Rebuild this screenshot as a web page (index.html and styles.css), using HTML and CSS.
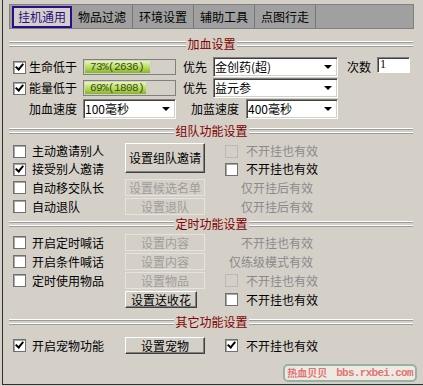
FILE: index.html
```html
<!DOCTYPE html>
<html lang="zh-CN">
<head>
  <meta charset="UTF-8">
  <title>挂机通用</title>
  <link rel="stylesheet" href="styles.css">
</head>
<body>
  <div class="window">
    <div class="tabs">
      <div class="tab active">挂机通用</div>
      <div class="tab">物品过滤</div>
      <div class="tab">环境设置</div>
      <div class="tab">辅助工具</div>
      <div class="tab">点图行走</div>
    </div>

    <div class="head first"><span class="groove"></span><span class="title">加血设置</span><span class="groove"></span></div>
    <div class="blood">
      <div class="brow">
        <span class="cb on"></span><span class="name">生命低于</span>
        <div class="bar"><div class="fill" style="width:73%">73%(2636)</div></div>
        <span class="pri">优先</span>
        <div class="select wide">金创药(超)<i class="arrow"></i></div>
        <span class="times">次数</span>
        <div class="edit">1</div>
      </div>
      <div class="brow">
        <span class="cb on"></span><span class="name">能量低于</span>
        <div class="bar"><div class="fill" style="width:69%">69%(1808)</div></div>
        <span class="pri">优先</span>
        <div class="select wide">益元参<i class="arrow"></i></div>
      </div>
      <div class="brow">
        <span class="name indent">加血速度</span>
        <div class="select mid">100毫秒<i class="arrow"></i></div>
        <span class="speed">加蓝速度</span>
        <div class="select mid2">400毫秒<i class="arrow"></i></div>
      </div>
    </div>

    <div class="head team-head"><span class="groove"></span><span class="title">组队功能设置</span><span class="groove"></span></div>
    <div class="grid team">
      <div class="item"><span class="cb"></span>主动邀请别人</div>
      <div class="btn tall">设置组队邀请</div>
      <div class="item right off"><span class="cb"></span>不开挂也有效</div>

      <div class="item"><span class="cb on"></span>接受别人邀请</div>
      <div class="item right"><span class="cb"></span>不开挂也有效</div>

      <div class="item"><span class="cb"></span>自动移交队长</div>
      <div class="btn off">设置候选名单</div>
      <div class="note">仅开挂后有效</div>

      <div class="item"><span class="cb"></span>自动退队</div>
      <div class="btn off">设置退队</div>
      <div class="note">仅开挂后有效</div>
    </div>

    <div class="head timer-head"><span class="groove"></span><span class="title">定时功能设置</span><span class="groove"></span></div>
    <div class="grid timer">
      <div class="item"><span class="cb"></span>开启定时喊话</div>
      <div class="btn off">设置内容</div>
      <div class="note">不开挂也有效</div>

      <div class="item"><span class="cb"></span>开启条件喊话</div>
      <div class="btn off">设置内容</div>
      <div class="note">仅练级模式有效</div>

      <div class="item"><span class="cb"></span>定时使用物品</div>
      <div class="btn off">设置物品</div>
      <div class="item right off"><span class="cb"></span>不开挂也有效</div>

      <div></div>
      <div class="btn short">设置送收花</div>
      <div class="item right"><span class="cb"></span>不开挂也有效</div>
    </div>

    <div class="head other-head"><span class="groove"></span><span class="title">其它功能设置</span><span class="groove"></span></div>
    <div class="grid other">
      <div class="item"><span class="cb on"></span>开启宠物功能</div>
      <div class="btn">设置宠物</div>
      <div class="item right"><span class="cb on"></span>不开挂也有效</div>
    </div>

    <div class="mark"><span class="mark-cn">热血贝贝</span>bbs.rxbei.com</div>
  </div>
</body>
</html>
```

FILE: styles.css
```css
body { margin: 0; padding-left: 2px; background: #d4d0c8; color: #000; font: 12px/14px "Noto Sans CJK SC", "Liberation Sans", sans-serif; }
.window { position: relative; height: 384px; border-left: 1px solid #303030; border-bottom: 1px solid #303030; overflow: hidden; }

/* tabs */
.tabs { display: flex; box-sizing: border-box; width: 405px; height: 25px; margin: 4px 0 0 6px; padding-left: 1px; background: #a0a0a0; border: 1px solid #808080; }
.tab { display: flex; align-items: center; justify-content: center; width: 60px; border-right: 1px solid #767676; }
.tab.active { box-sizing: border-box; width: 60px; height: 22px; margin: 1px 0 0 1px; background: #d4d0c8; border: 2px solid #2c0c8c; color: #2c0c8c; }

/* section headings */
.head { display: flex; align-items: center; height: 16px; margin: 0 10px 0 6px; color: #800000; }
.head .title { padding: 0 1px 0 2px; }
.groove { flex: 1; height: 6px; background: linear-gradient(#fff 0 1px, #9c9c9c 1px 2px, transparent 2px 4px, #fff 4px 5px, #9c9c9c 5px 6px); }
.first { margin-top: 7px; }
.team-head { margin-top: 4px; }
.timer-head { margin-top: 1px; }
.other-head { margin-top: 6px; }

/* checkbox */
.cb { position: relative; flex: none; box-sizing: border-box; width: 13px; height: 13px; background: #fff; border: 1px solid #707070; box-shadow: inset 1px 1px 0 #a8a8a8; }
.cb.on::after { content: ""; position: absolute; left: 3px; top: 0; width: 3px; height: 6px; border: solid #000; border-width: 0 2px 2px 0; transform: rotate(40deg); }
.off .cb { background: transparent; border-color: #bdb9b1; box-shadow: none; }

/* blood rows */
.blood { display: flex; flex-direction: column; gap: 1px; margin-top: 5px; padding-left: 10px; }
.brow { display: flex; align-items: center; height: 20px; }
.name { width: 54px; margin-left: 3px; }
.name.indent { margin-left: 16px; }
.bar { box-sizing: border-box; width: 93px; height: 16px; padding: 1px; border: 1px solid #808080; }
.fill { box-sizing: border-box; height: 100%; padding-left: 5px; background: linear-gradient(#e6f6b8, #b4dc5c 55%, #86b42c); color: #3c4c18; font: 11px/12px "Liberation Mono", monospace; letter-spacing: -0.6px; white-space: nowrap; }
.pri { margin-left: 7px; }
.times { margin-left: 9px; }
.speed { margin-left: 15px; }
.select { display: flex; align-items: center; box-sizing: border-box; height: 20px; padding-left: 1px; background: #fff; border: 1px solid; border-color: #808080 #fff #fff #808080; box-shadow: inset 1px 1px 0 #404040, inset -1px -1px 0 #d4d0c8; }
.select.wide { width: 125px; margin-left: 6px; }
.select.mid { width: 93px; }
.select.mid2 { width: 92px; margin-left: 7px; }
.arrow { margin: 0 5px 0 auto; border-top: 4px solid #000; border-left: 4px solid transparent; border-right: 4px solid transparent; }
.edit { align-self: flex-start; box-sizing: border-box; width: 33px; height: 16px; margin-left: 6px; padding: 0 2px; background: #fff; border: 1px solid; border-color: #808080 #fff #fff #808080; box-shadow: inset 1px 1px 0 #404040; font: 12px/13px "Liberation Serif", serif; }

/* option grids */
.grid { display: grid; grid-template-columns: 112px 100px 1fr; row-gap: 2px; padding-left: 10px; }
.team { margin-top: 4px; grid-template-rows: 16px 16px 17px 17px; }
.timer { margin-top: 2px; grid-template-rows: repeat(4, 17px); }
.other { margin-top: 7px; grid-template-rows: 17px; }
.item { display: flex; align-items: center; gap: 6px; white-space: nowrap; }
.item.right { gap: 8px; }
.item.off, .note { color: #8a8a8a; }
.note { display: flex; align-items: center; justify-content: flex-end; width: 88px; }
.btn { display: flex; align-items: center; justify-content: center; box-sizing: border-box; width: 80px; height: 17px; border: 1px solid; border-color: #fff #404040 #404040 #fff; box-shadow: inset -1px -1px 0 #808080; }
.btn.tall { grid-row: span 2; height: 30px; }
.btn.short { width: 72px; }
.btn.off { border-color: #e6e3dd; box-shadow: none; color: #a09c98; }

/* watermark */
.mark { position: absolute; left: 280px; top: 364px; box-sizing: border-box; width: 134px; height: 18px; display: flex; align-items: center; justify-content: center; background: #eeeae2; border: 2px solid #96b2a4; border-radius: 5px; color: #e07474; font: bold 11px/12px "Liberation Mono", "Noto Sans CJK SC", monospace; letter-spacing: -0.7px; }
.mark-cn { margin-right: 9px; font: bold 10px/12px "Noto Sans CJK SC", sans-serif; letter-spacing: 0; }
```
